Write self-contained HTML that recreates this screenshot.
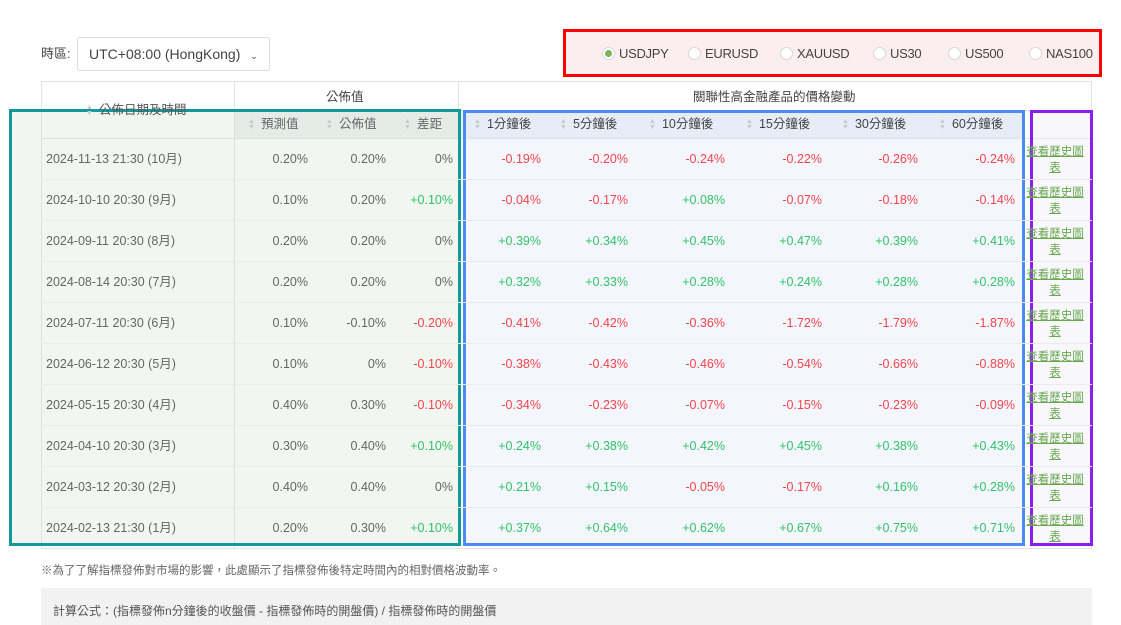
<!DOCTYPE html>
<html><head><meta charset="utf-8"><style>
*{margin:0;padding:0;box-sizing:border-box}
body{width:1121px;height:625px;background:#fff;font-family:"Liberation Sans","Noto Sans CJK TC",sans-serif;font-size:12px;color:#666;position:relative;overflow:hidden}
.a{position:absolute;white-space:nowrap;line-height:16px}
.r{text-align:right}
.red{color:#f2444c}.grn{color:#33c26a}
.hl{position:absolute;background:#e3e3e3}
.lk{position:absolute;color:#6aa84f;text-decoration:underline;font-size:11.5px;text-align:center;width:60px;line-height:16px;white-space:normal}
.sort{display:inline-block;font-size:7px;line-height:6px;color:#c8c8c8;vertical-align:middle;margin-right:6px;text-align:center}
.rad{position:absolute;width:13px;height:13px;border:1px solid #d8d8d8;border-radius:50%;background:#fff}
</style></head><body>
<div class="a" style="left:41px;top:46px;font-size:13px;color:#444">時區:</div>
<div class="a" style="left:77px;top:37px;width:193px;height:34px;border:1px solid #ddd;border-radius:3px;font-size:14px;color:#444;padding:8px 0 0 11px">UTC+08:00 (HongKong) <span style="font-size:9px;margin-left:6px">⌄</span></div>

<div class="a" style="left:41px;top:81px;width:1051px;height:468px;border:1px solid #e3e3e3"></div>
<div class="a" style="left:234px;top:110px;width:790px;height:28px;background:#eef1f5"></div>
<div class="hl" style="left:234px;top:110px;width:224px;height:1px"></div>
<div class="hl" style="left:458px;top:110px;width:634px;height:1px"></div>
<div class="hl" style="left:41px;top:138px;width:1051px;height:1px"></div>
<div class="hl" style="left:234px;top:81px;width:1px;height:468px"></div>
<div class="hl" style="left:458px;top:81px;width:1px;height:468px"></div>

<div class="a" style="left:9px;top:109px;width:452px;height:437px;border:3px solid #12999a;background:rgba(200,225,195,.25)"></div>
<div class="a" style="left:463px;top:110px;width:562px;height:436px;border:3px solid #4a8af2;background:rgba(215,228,250,.3)"></div>
<div class="a" style="left:1030px;top:110px;width:63px;height:436px;border:3px solid #8a1ef0;background:rgba(235,235,248,.4)"></div>
<div class="a" style="left:563px;top:29px;width:539px;height:48px;border:3px solid #f00;background:#fbeeee"></div>

<div class="a" style="left:86px;top:102px;font-size:12.5px;color:#555"><span class="sort">▲<br>▼</span>公佈日期及時間</div>
<div class="a" style="left:326px;top:89px;font-size:12.5px;color:#444">公佈值</div>
<div class="a" style="left:693px;top:89px;font-size:12.5px;color:#444">關聯性高金融產品的價格變動</div>
<div class="a" style="left:248px;top:116px;font-size:12.5px"><span class="sort">▲<br>▼</span>預測值</div>
<div class="a" style="left:326px;top:116px;font-size:12.5px"><span class="sort">▲<br>▼</span>公佈值</div>
<div class="a" style="left:404px;top:116px;font-size:12.5px"><span class="sort">▲<br>▼</span>差距</div>
<div class="a" style="left:474px;top:116px;font-size:12.5px;color:#444"><span class="sort">▲<br>▼</span>1分鐘後</div>
<div class="a" style="left:560px;top:116px;font-size:12.5px;color:#444"><span class="sort">▲<br>▼</span>5分鐘後</div>
<div class="a" style="left:649px;top:116px;font-size:12.5px;color:#444"><span class="sort">▲<br>▼</span>10分鐘後</div>
<div class="a" style="left:746px;top:116px;font-size:12.5px;color:#444"><span class="sort">▲<br>▼</span>15分鐘後</div>
<div class="a" style="left:842px;top:116px;font-size:12.5px;color:#444"><span class="sort">▲<br>▼</span>30分鐘後</div>
<div class="a" style="left:939px;top:116px;font-size:12.5px;color:#444"><span class="sort">▲<br>▼</span>60分鐘後</div>

<span class="rad" style="left:602px;top:47px"><span style="position:absolute;left:2px;top:2px;width:7px;height:7px;border-radius:50%;background:#7cb25a"></span></span>
<div class="a" style="left:619px;top:46px;font-size:13px;color:#444;letter-spacing:-0.3px">USDJPY</div>
<span class="rad" style="left:688px;top:47px"></span>
<div class="a" style="left:705px;top:46px;font-size:13px;color:#444;letter-spacing:-0.3px">EURUSD</div>
<span class="rad" style="left:780px;top:47px"></span>
<div class="a" style="left:797px;top:46px;font-size:13px;color:#444;letter-spacing:-0.3px">XAUUSD</div>
<span class="rad" style="left:873px;top:47px"></span>
<div class="a" style="left:890px;top:46px;font-size:13px;color:#444;letter-spacing:-0.3px">US30</div>
<span class="rad" style="left:948px;top:47px"></span>
<div class="a" style="left:965px;top:46px;font-size:13px;color:#444;letter-spacing:-0.3px">US500</div>
<span class="rad" style="left:1029px;top:47px"></span>
<div class="a" style="left:1046px;top:46px;font-size:13px;color:#444;letter-spacing:-0.3px">NAS100</div>

<div id="rows"></div>

<div class="a" style="left:41px;top:563px;font-size:11.5px">※為了了解指標發佈對市場的影響，此處顯示了指標發佈後特定時間內的相對價格波動率。</div>
<div class="a" style="left:41px;top:588px;width:1051px;height:37px;background:#f2f2f2"></div>
<div class="a" style="left:53px;top:603px;font-size:12px;color:#555">計算公式：(指標發佈n分鐘後的收盤價 - 指標發佈時的開盤價) / 指標發佈時的開盤價</div>

<script>
var d=[
["2024-11-13 21:30 (10月)","0.20%","0.20%","0%","-0.19%","-0.20%","-0.24%","-0.22%","-0.26%","-0.24%"],
["2024-10-10 20:30 (9月)","0.10%","0.20%","+0.10%","-0.04%","-0.17%","+0.08%","-0.07%","-0.18%","-0.14%"],
["2024-09-11 20:30 (8月)","0.20%","0.20%","0%","+0.39%","+0.34%","+0.45%","+0.47%","+0.39%","+0.41%"],
["2024-08-14 20:30 (7月)","0.20%","0.20%","0%","+0.32%","+0.33%","+0.28%","+0.24%","+0.28%","+0.28%"],
["2024-07-11 20:30 (6月)","0.10%","-0.10%","-0.20%","-0.41%","-0.42%","-0.36%","-1.72%","-1.79%","-1.87%"],
["2024-06-12 20:30 (5月)","0.10%","0%","-0.10%","-0.38%","-0.43%","-0.46%","-0.54%","-0.66%","-0.88%"],
["2024-05-15 20:30 (4月)","0.40%","0.30%","-0.10%","-0.34%","-0.23%","-0.07%","-0.15%","-0.23%","-0.09%"],
["2024-04-10 20:30 (3月)","0.30%","0.40%","+0.10%","+0.24%","+0.38%","+0.42%","+0.45%","+0.38%","+0.43%"],
["2024-03-12 20:30 (2月)","0.40%","0.40%","0%","+0.21%","+0.15%","-0.05%","-0.17%","+0.16%","+0.28%"],
["2024-02-13 21:30 (1月)","0.20%","0.30%","+0.10%","+0.37%","+0.64%","+0.62%","+0.67%","+0.75%","+0.71%"]];
var R=[308,386,453,541,628,725,822,918,1015],h="";
d.forEach(function(r,i){var y=159+41*i;
h+='<div class="a" style="left:46px;top:'+(y-8)+'px;font-size:12.5px">'+r[0]+'</div>';
for(var j=1;j<10;j++){var v=r[j],c=v[0]=="-"?"red":v[0]=="+"?"grn":"";if(j<3)c="";
h+='<div class="a r '+c+'" style="right:'+(1121-R[j-1])+'px;top:'+(y-8)+'px;font-size:12.5px">'+v+'</div>';}
h+='<div class="lk" style="left:1025px;top:'+(y-15)+'px">查看歷史圖表</div>';
if(i<9)h+='<div class="hl" style="left:41px;top:'+(y+20)+'px;width:1051px;height:1px;background:#ececec"></div>';});
document.getElementById("rows").innerHTML=h;
</script>
</body></html>
